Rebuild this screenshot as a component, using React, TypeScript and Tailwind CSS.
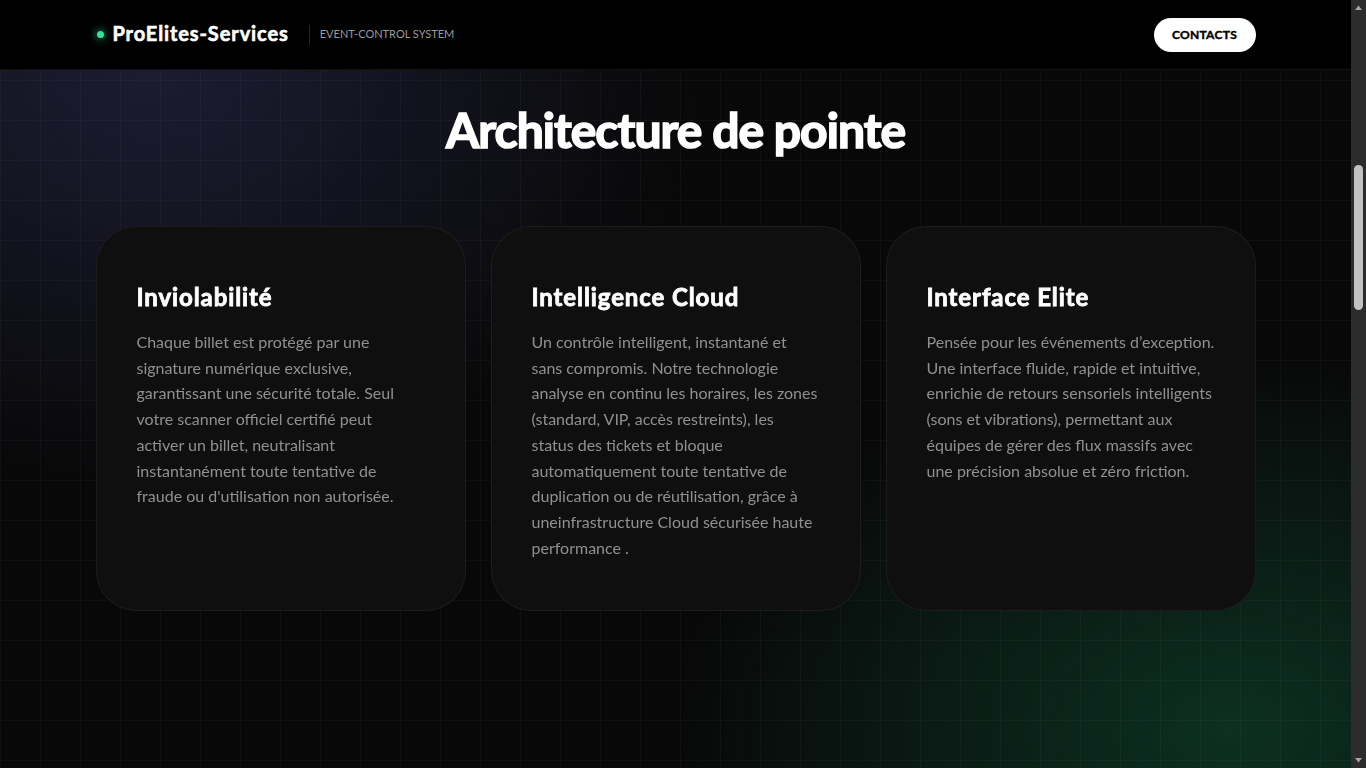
const FEATURES = [
  {
    title: "Inviolabilité",
    lines: [
      "Chaque billet est protégé par une",
      "signature numérique exclusive,",
      "garantissant une sécurité totale. Seul",
      "votre scanner officiel certifié peut",
      "activer un billet, neutralisant",
      "instantanément toute tentative de",
      "fraude ou d'utilisation non autorisée.",
    ],
  },
  {
    title: "Intelligence Cloud",
    lines: [
      "Un contrôle intelligent, instantané et",
      "sans compromis. Notre technologie",
      "analyse en continu les horaires, les zones",
      "(standard, VIP, accès restreints), les",
      "status des tickets et bloque",
      "automatiquement toute tentative de",
      "duplication ou de réutilisation, grâce à",
      "uneinfrastructure Cloud sécurisée haute",
      "performance .",
    ],
  },
  {
    title: "Interface Elite",
    lines: [
      "Pensée pour les événements d’exception.",
      "Une interface fluide, rapide et intuitive,",
      "enrichie de retours sensoriels intelligents",
      "(sons et vibrations), permettant aux",
      "équipes de gérer des flux massifs avec",
      "une précision absolue et zéro friction.",
    ],
  },
];

function Header() {
  return (
    <header className="fixed top-0 left-0 right-[15px] z-20 h-[70px] bg-black border-b border-white/[0.07]">
      <div className="w-[1160px] mx-auto h-full flex items-center justify-between">
        <div className="flex items-center">
          <span className="ml-px w-[7px] h-[7px] rounded-full bg-[#34e39b] shadow-[0_0_8px_#34e39b]" />
          <span className="ml-[9px] mb-1 text-white text-[20px] font-bold tracking-[0.9px] [-webkit-text-stroke:0.6px_white]">
            ProElites-Services
          </span>
          <span className="ml-5 h-[20px] w-px bg-white/15" />
          <span className="ml-[10px] text-[11px] text-[#9a9a9a] uppercase">
            Event-Control System
          </span>
        </div>
        <button className="h-[34px] w-[102px] rounded-full bg-white text-black text-[12px] font-bold tracking-[0.3px] [-webkit-text-stroke:0.4px_black]">
          CONTACTS
        </button>
      </div>
    </header>
  );
}

function FeatureCard({ title, lines }: { title: string; lines: string[] }) {
  return (
    <div className="rounded-[40px] bg-[#0f0f10] border border-white/[0.06] pl-10 pr-6 pt-[54px] pb-[50px]">
      <h3 className="text-white text-[24px] leading-8 font-bold tracking-[0.9px] [-webkit-text-stroke:0.8px_white]">
        {title}
      </h3>
      <p className="mt-4 text-[16px] leading-[25.7px] text-[#909090] whitespace-nowrap">
        {lines.map((l, i) => (
          <span key={i}>
            {l}
            {i < lines.length - 1 && <br />}
          </span>
        ))}
      </p>
    </div>
  );
}

// barre de défilement (thème sombre) telle qu'elle apparaît sur la capture
function Scrollbar() {
  return (
    <div className="fixed top-0 right-0 bottom-0 z-30 w-[15px] bg-[#2c2c2c] flex flex-col items-center">
      <svg width="15" height="15" viewBox="0 0 15 15" className="shrink-0">
        <path d="M4 10 L11 10 L7.5 5.5 Z" fill="#a3a3a3" />
      </svg>
      <div className="mt-[150px] w-[9px] h-[145px] rounded-full bg-[#c2c2c2]" />
      <div className="flex-1" />
      <svg width="15" height="15" viewBox="0 0 15 15" className="shrink-0">
        <path d="M4 5 L11 5 L7.5 9.5 Z" fill="#a3a3a3" />
      </svg>
    </div>
  );
}

export default function App() {
  return (
    <div className="relative min-h-screen pr-[15px] text-white font-['Lato','Liberation_Sans',sans-serif]">
      {/* Fond fixe : lueurs + grille */}
      <div className="fixed top-0 left-0 bottom-0 right-[15px] -z-10 bg-[#080808]">
        <div className="absolute inset-0 bg-[radial-gradient(ellipse_560px_420px_at_150px_70px,#1c1c32_0%,rgba(24,24,42,0.75)_40%,transparent_100%)]" />
        <div className="absolute inset-0 bg-[radial-gradient(ellipse_560px_380px_at_1230px_730px,#0c3022_0%,rgba(11,42,30,0.7)_40%,transparent_100%)]" />
        <div className="absolute inset-0 bg-[linear-gradient(rgba(255,255,255,0.03)_1px,transparent_1px),linear-gradient(90deg,rgba(255,255,255,0.03)_1px,transparent_1px)] bg-[size:40px_40px]" />
      </div>

      <Header />
      <Scrollbar />

      {/* Architecture */}
      <section className="pt-[106px] pb-[157px]">
        <h2 className="text-center text-[48px] leading-[48px] font-bold tracking-[-0.02em] text-white [-webkit-text-stroke:1.6px_white]">
          Architecture de pointe
        </h2>
        <div className="w-[1160px] mx-auto mt-[72px] grid grid-cols-3 gap-[25px]">
          {FEATURES.map((f) => (
            <FeatureCard key={f.title} title={f.title} lines={f.lines} />
          ))}
        </div>
      </section>
    </div>
  );
}
